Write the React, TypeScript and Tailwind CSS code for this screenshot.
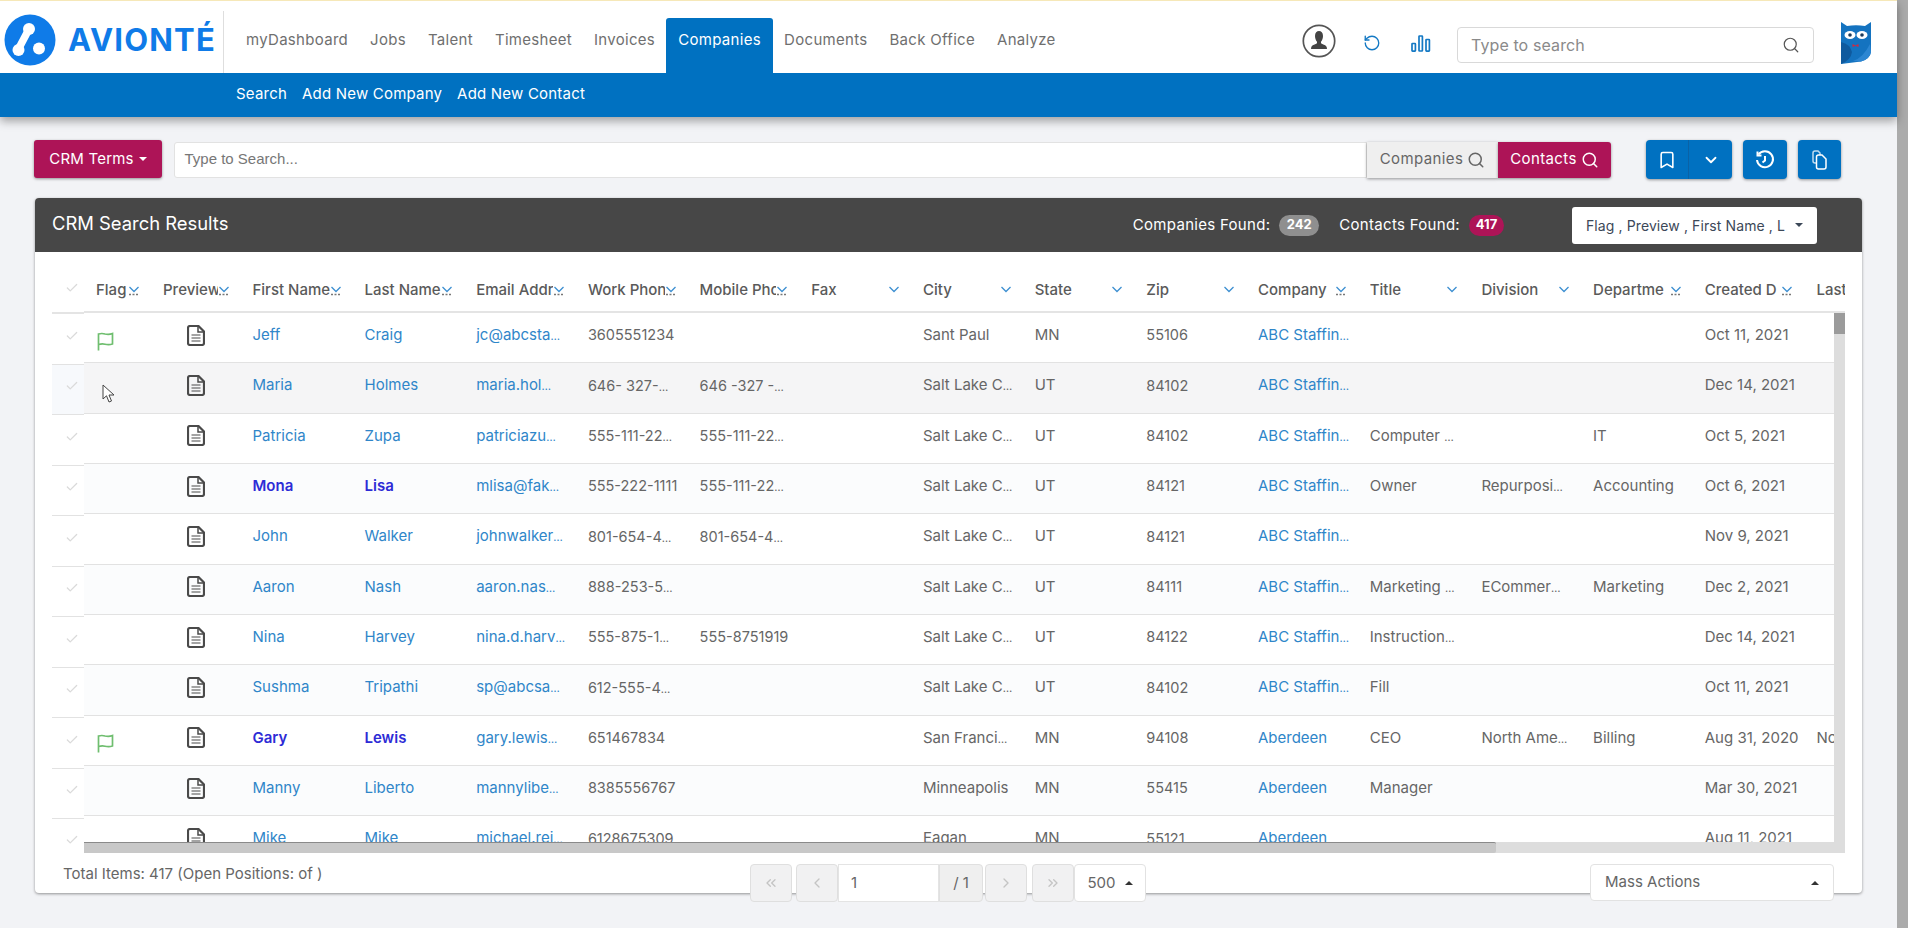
import { Search, ChevronDown, ChevronLeft, ChevronRight, ChevronsLeft, ChevronsRight, RotateCcw, Bookmark, Check } from "lucide-react";

type Row = {
  first: string;
  last: string;
  email: string;
  work?: string;
  mobile?: string;
  city: string;
  state: string;
  zip: string;
  company: string;
  title?: string;
  division?: string;
  dept?: string;
  created: string;
  lastCol?: string;
  flag?: boolean;
  bold?: boolean;
};

const ROWS: Row[] = [
  { first: "Jeff", last: "Craig", email: "jc@abcsta…", work: "3605551234", city: "Sant Paul", state: "MN", zip: "55106", company: "ABC Staffin…", created: "Oct 11, 2021", flag: true },
  { first: "Maria", last: "Holmes", email: "maria.hol…", work: "646- 327-…", mobile: "646 -327 -…", city: "Salt Lake C…", state: "UT", zip: "84102", company: "ABC Staffin…", created: "Dec 14, 2021" },
  { first: "Patricia", last: "Zupa", email: "patriciazu…", work: "555-111-22…", mobile: "555-111-22…", city: "Salt Lake C…", state: "UT", zip: "84102", company: "ABC Staffin…", title: "Computer …", dept: "IT", created: "Oct 5, 2021" },
  { first: "Mona", last: "Lisa", email: "mlisa@fak…", work: "555-222-1111", mobile: "555-111-22…", city: "Salt Lake C…", state: "UT", zip: "84121", company: "ABC Staffin…", title: "Owner", division: "Repurposi…", dept: "Accounting", created: "Oct 6, 2021", bold: true },
  { first: "John", last: "Walker", email: "johnwalker…", work: "801-654-4…", mobile: "801-654-4…", city: "Salt Lake C…", state: "UT", zip: "84121", company: "ABC Staffin…", created: "Nov 9, 2021" },
  { first: "Aaron", last: "Nash", email: "aaron.nas…", work: "888-253-5…", city: "Salt Lake C…", state: "UT", zip: "84111", company: "ABC Staffin…", title: "Marketing …", division: "ECommer…", dept: "Marketing", created: "Dec 2, 2021" },
  { first: "Nina", last: "Harvey", email: "nina.d.harv…", work: "555-875-1…", mobile: "555-8751919", city: "Salt Lake C…", state: "UT", zip: "84122", company: "ABC Staffin…", title: "Instruction…", created: "Dec 14, 2021" },
  { first: "Sushma", last: "Tripathi", email: "sp@abcsa…", work: "612-555-4…", city: "Salt Lake C…", state: "UT", zip: "84102", company: "ABC Staffin…", title: "Fill", created: "Oct 11, 2021" },
  { first: "Gary", last: "Lewis", email: "gary.lewis…", work: "651467834", city: "San Franci…", state: "MN", zip: "94108", company: "Aberdeen", title: "CEO", division: "North Ame…", dept: "Billing", created: "Aug 31, 2020", lastCol: "No", flag: true, bold: true },
  { first: "Manny", last: "Liberto", email: "mannylibe…", work: "8385556767", city: "Minneapolis", state: "MN", zip: "55415", company: "Aberdeen", title: "Manager", created: "Mar 30, 2021" },
  { first: "Mike", last: "Mike", email: "michael.rei…", work: "6128675309", city: "Eagan", state: "MN", zip: "55121", company: "Aberdeen", created: "Aug 11, 2021" },
];

const HEADERS: { label: string; dots?: boolean; width: string }[] = [
  { label: "Flag", dots: true, width: "w-[67px]" },
  { label: "Preview", dots: true, width: "w-[89.5px]" },
  { label: "First Name", dots: true, width: "w-[112px]" },
  { label: "Last Name", dots: true, width: "w-[111.7px]" },
  { label: "Email Addr", dots: true, width: "w-[111.7px]" },
  { label: "Work Phon", dots: true, width: "w-[111.7px]" },
  { label: "Mobile Pho", dots: true, width: "w-[111.7px]" },
  { label: "Fax", width: "w-[111.7px]" },
  { label: "City", width: "w-[111.7px]" },
  { label: "State", width: "w-[111.7px]" },
  { label: "Zip", width: "w-[111.7px]" },
  { label: "Company", dots: true, width: "w-[111.7px]" },
  { label: "Title", width: "w-[111.7px]" },
  { label: "Division", width: "w-[111.7px]" },
  { label: "Departme", dots: true, width: "w-[111.7px]" },
  { label: "Created D", dots: true, width: "w-[111.7px]" },
];

function Logo() {
  return (
    <svg width="52" height="52" viewBox="0 0 52 52" className="shrink-0">
      <circle cx="26" cy="26" r="25.5" fill="#0f7be8" />
      <path d="M25 15 L14.500 35" stroke="#fff" strokeWidth="7.500" strokeLinecap="round" />
      <circle cx="25" cy="15" r="6" fill="#fff" />
      <circle cx="14.500" cy="36" r="6" fill="#fff" />
      <circle cx="35" cy="34.500" r="6" fill="#fff" />
    </svg>
  );
}

function UserCircle() {
  return (
    <svg width="34" height="34" viewBox="0 0 34 34">
      <circle cx="17" cy="17" r="15.7" fill="none" stroke="#555" strokeWidth="1.7" />
      <path d="M13 12c0-3.400 1.800-5 4-5s4 1.600 4 5c0 2.500-.9 4.600-2 5.700v1.600c1 1 4.700 1.500 5.700 3.700l.3 2H9l.3-2c1-2.200 4.700-2.700 5.700-3.700v-1.600c-1.100-1.100-2-3.200-2-5.700z" fill="#444" />
    </svg>
  );
}

function Bars() {
  return (
    <svg width="20" height="17" viewBox="0 0 20 17" fill="none" stroke="#1479c4" strokeWidth="1.700">
      <rect x="1" y="8.500" width="3.400" height="7.600" rx="0.5" />
      <rect x="8" y="1" width="3.400" height="15" rx="0.5" />
      <rect x="15" y="4.500" width="3.400" height="11.600" rx="0.5" />
    </svg>
  );
}

function Owl() {
  return (
    <svg width="30" height="42" viewBox="0 0 30 42">
      <path d="M0 0 L6 4 Q15 2.500 24 4 L30 0 V30 Q29 37 20 39.500 L0 42 Z" fill="#1473c0" />
      <path d="M0 20 Q9 22 11 30 Q10 38 0 42 Z" fill="#0f5a9e" />
      <path d="M12 39 Q22 36 29 22 L30 30 Q29 37 20 39.500 Z" fill="#2c86d2" />
      <ellipse cx="9" cy="13" rx="5.500" ry="4" fill="#fff" />
      <ellipse cx="21" cy="13" rx="5.500" ry="4" fill="#fff" />
      <circle cx="9" cy="13" r="1.800" fill="#1d3b5c" />
      <circle cx="21" cy="13" r="1.800" fill="#1d3b5c" />
      <path d="M11.500 22 L14.500 23.500 L17.500 22 V25 L14.500 23.800 L11.500 25 Z" fill="#d8263c" />
    </svg>
  );
}

function SortIcon({ dots }: { dots?: boolean }) {
  return (
    <svg width="12" height="12" viewBox="0 0 12 12" fill="none" className="shrink-0">
      <path d="M1.500 3 L6 7.500 L10.500 3" stroke="#3d8fd1" strokeWidth="1.300" />
      {dots && <path d="M1 10.500 H11" stroke="#777" strokeWidth="1.300" strokeDasharray="2 1.500" />}
    </svg>
  );
}

function DocIcon() {
  return (
    <svg width="18" height="21" viewBox="0 0 18 21" fill="none" stroke="#4a4a4a" strokeWidth="2.200">
      <path d="M3 1 H11.500 L17 6.500 V18 Q17 20 15 20 H3 Q1 20 1 18 V3 Q1 1 3 1 Z" strokeLinejoin="round" />
      <path d="M11 1 V7 H17" strokeWidth="1.500" />
      <path d="M4.500 10 H13.500 M4.500 13 H13.500 M4.500 16 H13.500" strokeWidth="1.200" />
    </svg>
  );
}

function FlagIcon() {
  return (
    <svg width="17" height="19" viewBox="0 0 17 19" fill="none" stroke="#6fbe6f" strokeWidth="1.700">
      <path d="M1.500 18.500 V2 Q5 1 8 2 Q12 3 15.500 1.500 V12 Q12 13.200 8 12.200 Q5 11.500 1.500 12.500" />
    </svg>
  );
}

function Cursor() {
  return (
    <svg width="13" height="20" viewBox="0 0 13 20" className="absolute left-[18px] top-[21px]">
      <path d="M1 1 V15 L4.500 11.800 L7 18 L9.500 17 L7 11 H12 Z" fill="#fff" stroke="#444" strokeWidth="1" />
    </svg>
  );
}

function HistoryIcon() {
  return (
    <svg width="20" height="20" viewBox="0 0 20 20" fill="none" stroke="#fff" strokeWidth="2">
      <path d="M3.500 4.500 A8 8 0 1 1 2 10" />
      <path d="M2.500 1.500 V5.500 H6.500" />
      <path d="M10 6 V10.500 L7.500 12.500" />
    </svg>
  );
}

function CopyIcon() {
  return (
    <svg width="15" height="20" viewBox="0 0 15 20" fill="none" stroke="#fff" strokeWidth="1.500">
      <path d="M1 3 Q1 1 3 1 H6 L8 3 V13 H3 Q1 13 1 11 Z" opacity="0.75" />
      <path d="M4.500 7 Q4.500 5 6.500 5 H10 L14 9 V17 Q14 19 12 19 H6.500 Q4.500 19 4.500 17 Z" fill="#0071c1" />
    </svg>
  );
}

function Caret({ up }: { up?: boolean }) {
  return up ? (
    <span className="inline-block h-0 w-0 border-x-[4px] border-b-[4px] border-x-transparent border-b-[#333]" />
  ) : (
    <span className="inline-block h-0 w-0 border-x-[4px] border-t-[4px] border-x-transparent border-t-current" />
  );
}

function PageBtn({ children }: { children: React.ReactNode }) {
  return (
    <div className="flex h-[38px] w-[42px] items-center justify-center rounded-[4px] border border-[#dfdfdf] bg-[#f1f1f2] text-[#c4c4c4]">
      {children}
    </div>
  );
}

// the browser's own ellipsis in the original font is narrower than Inter's
function Clipped({ text }: { text?: string }) {
  if (!text || !text.endsWith("…")) return <>{text}</>;
  return (
    <>
      {text.slice(0, -1)}
      <span className="text-[11px]">…</span>
    </>
  );
}

function Cell({ w, text, cls }: { w: string; text?: string; cls?: string }) {
  return (
    <div className={`${w} shrink-0 truncate pl-[12px] pb-[5px] ${cls ?? ""}`}>
      <Clipped text={text} />
    </div>
  );
}

export default function App() {
  const nav = ["myDashboard", "Jobs", "Talent", "Timesheet", "Invoices", "Companies", "Documents", "Back Office", "Analyze"];

  return (
    <div className="flex h-[928px] w-[1908px] overflow-hidden bg-[#f2f3f6] [font-family:Inter,sans-serif] text-[15px] text-[#666]">
      <div className="flex w-[1897px] shrink-0 flex-col">
        <div className="relative z-10 shadow-[0_4px_9px_rgba(0,0,0,0.35)]">
          <div className="h-[1px] bg-[#f6e8b8]" />
          <div className="flex h-[72px] items-end bg-white">
            <div className="flex h-[62px] w-[224px] shrink-0 items-center gap-[12px] border-r border-[#dedede] pb-[5px] pl-[4px]">
              <Logo />
              <span className="text-[31px] leading-none font-bold tracking-[1.2px] text-[#0f7be8]">AVIONTÉ</span>
            </div>
            <nav className="ml-[11px] flex h-[55px] items-stretch">
              {nav.map((item) =>
                item === "Companies" ? (
                  <div key={item} className="flex w-[107px] items-center justify-center rounded-t-[3px] bg-[#0071c1] pb-[11px] tracking-[0.3px] text-white">
                    {item}
                  </div>
                ) : (
                  <div key={item} className="flex items-center px-[11px] pb-[11px] tracking-[0.3px] text-[#6f6f6f]">
                    {item}
                  </div>
                ),
              )}
            </nav>
            <div className="ml-auto flex h-full items-center pt-[8px] pr-[26px]">
              <UserCircle />
              <RotateCcw size={18} strokeWidth={1.8} color="#1479c4" className="mt-[4px] ml-[27px]" />
              <div className="mt-[5px] ml-[30px]">
                <Bars />
              </div>
              <div className="mt-[8px] ml-[26px] flex h-[36px] w-[357px] items-center justify-between rounded-[4px] border border-[#d9d9d9] pr-[13px] pl-[13px] text-[16px] tracking-[0.1px] text-[#8a8a8a]">
                Type to search
                <Search size={18} strokeWidth={1.6} color="#555" />
              </div>
              <div className="mt-[4px] ml-[27px]">
                <Owl />
              </div>
            </div>
          </div>
          <div className="flex h-[44px] items-center gap-[15px] bg-[#0071c1] pb-[2px] pl-[236px] tracking-[0.2px] text-white">
            <span>Search</span>
            <span>Add New Company</span>
            <span>Add New Contact</span>
          </div>
        </div>

        <div className="flex pt-[23px] pl-[34px]">
          <div className="flex h-[38px] w-[128px] items-center justify-center gap-[5px] rounded-[3px] bg-[#ad1457] tracking-[0.2px] text-white shadow-[0_1px_3px_rgba(0,0,0,0.4)]">
            CRM Terms <Caret />
          </div>
          <div className="ml-[11.5px] flex h-[36px] w-[1193.5px] items-center self-center rounded-l-[3px] border border-[#e2e2e2] bg-white pl-[10px] [font-family:'Liberation_Sans',sans-serif] text-[15px] text-[#777]">
            Type to Search...
          </div>
          <div className="flex h-[36px] w-[131px] items-center justify-center gap-[4px] self-center bg-[#efefef] tracking-[0.4px] text-[#666] shadow-[0_1px_3px_rgba(0,0,0,0.4)]">
            Companies <Search size={18} strokeWidth={2} />
          </div>
          <div className="flex h-[36px] w-[113px] items-center justify-center gap-[4px] self-center rounded-r-[3px] bg-[#ad1457] tracking-[0.4px] text-white shadow-[0_1px_3px_rgba(0,0,0,0.4)]">
            Contacts <Search size={18} strokeWidth={2} />
          </div>
          <div className="ml-[35px] flex h-[39px] w-[86px] rounded-[4px] bg-[#0071c1] text-white shadow-[0_1px_3px_rgba(0,0,0,0.4)]">
            <div className="flex w-[43px] items-center justify-center border-r border-[#0a62a6]">
              <Bookmark size={20} strokeWidth={1.9} />
            </div>
            <div className="flex flex-1 items-center justify-center">
              <ChevronDown size={18} strokeWidth={2.4} />
            </div>
          </div>
          <div className="ml-[11px] flex h-[39px] w-[44px] items-center justify-center rounded-[4px] bg-[#0071c1] shadow-[0_1px_3px_rgba(0,0,0,0.4)]">
            <HistoryIcon />
          </div>
          <div className="ml-[11px] flex h-[39px] w-[43px] items-center justify-center rounded-[4px] bg-[#0071c1] shadow-[0_1px_3px_rgba(0,0,0,0.4)]">
            <CopyIcon />
          </div>
        </div>

        <div className="mt-[19px] ml-[35px] w-[1827px] rounded-[4px] bg-white shadow-[0_1px_3px_rgba(0,0,0,0.4)]">
          <div className="flex h-[54px] items-center rounded-t-[4px] bg-[#474747] pr-[45px] pl-[17px] text-white">
            <span className="pb-[2px] text-[18.4px]">CRM Search Results</span>
            <span className="ml-auto tracking-[0.3px]">Companies Found:</span>
            <span className="ml-[9px] flex h-[21px] w-[40px] items-center justify-center rounded-full bg-[#8f8f8f] text-[13px] font-bold">242</span>
            <span className="ml-[20px] tracking-[0.3px]">Contacts Found:</span>
            <span className="ml-[9px] flex h-[21px] w-[35px] items-center justify-center rounded-full bg-[#ad1457] text-[13px] font-bold">417</span>
            <div className="ml-[68px] flex h-[37px] w-[245px] items-center justify-between rounded-[3px] bg-white pr-[14px] pl-[14px] text-[14px] tracking-[0.1px] text-[#3c4858]">
              <span className="w-[203px] overflow-hidden whitespace-nowrap">Flag , Preview , First Name , L</span>
              <Caret />
            </div>
          </div>

          <div className="flex pr-[17px] pl-[17px]">
            <div className="w-[32px] shrink-0">
              <div className="flex h-[62px] items-center justify-center border-b-2 border-[#e4e4e4] pt-[12px] pl-[8px] text-[#dadada]">
                <Check size={14} strokeWidth={2.2} />
              </div>
              {ROWS.map((r, i) => (
                <div
                  key={r.first + i}
                  className={`flex items-center justify-center pl-[8px] text-[#dadada] ${i === 10 ? "h-[34px] pt-[8px]" : "h-[50.5px] border-b border-[#e2e2e2] pb-[6px]"} ${i === 1 ? "bg-[#f7f9fc]" : ""}`}
                >
                  <Check size={14} strokeWidth={2.2} />
                </div>
              ))}
            </div>

            <div className="w-[1761px] overflow-hidden">
              <div className="flex h-[61px] items-center whitespace-nowrap border-b-2 border-[#e4e4e4] pt-[17px] font-medium text-[#5a5a5a]">
                {HEADERS.map((h) => (
                  <div key={h.label} className={`${h.width} flex shrink-0 items-center justify-between pr-[11px] pl-[12px]`}>
                    <span className="min-w-0 overflow-hidden">{h.label}</span>
                    <SortIcon dots={h.dots} />
                  </div>
                ))}
                <div className="shrink-0 pl-[12px]">Last</div>
              </div>

              <div className="flex h-[529px]">
                <div className="w-[1750px] shrink-0 overflow-hidden">
                  {ROWS.map((r, i) => {
                    const link = `${r.bold ? "font-semibold text-[#2d2bd6]" : "text-[#2f86c9]"}`;
                    return (
                      <div
                        key={r.first + r.last}
                        className={`flex h-[50.33px] items-center whitespace-nowrap border-b border-[#e2e2e2] ${i === 1 ? "bg-[#f5f5f6]" : i % 2 === 1 ? "bg-[#fbfcfd]" : "bg-white"}`}
                      >
                        <div className="relative flex h-full w-[67px] shrink-0 items-center pt-[7px] pl-[13px]">
                          {r.flag && <FlagIcon />}
                          {i === 1 && <Cursor />}
                        </div>
                        <div className="flex w-[89.5px] shrink-0 items-center justify-center pb-[5px]">
                          <DocIcon />
                        </div>
                        <Cell w="w-[112px]" cls={link} text={r.first} />
                        <Cell w="w-[111.7px]" cls={link} text={r.last} />
                        <Cell w="w-[111.7px]" cls="text-[#2f86c9]" text={r.email} />
                        <Cell w="w-[111.7px]" cls="text-[14.5px]" text={r.work} />
                        <Cell w="w-[111.7px]" cls="text-[14.5px]" text={r.mobile} />
                        <Cell w="w-[111.7px]" />
                        <Cell w="w-[111.7px]" text={r.city} />
                        <Cell w="w-[111.7px]" text={r.state} />
                        <Cell w="w-[111.7px]" cls="text-[14.5px]" text={r.zip} />
                        <Cell w="w-[111.7px]" cls="text-[#2f86c9]" text={r.company} />
                        <Cell w="w-[111.7px]" text={r.title} />
                        <Cell w="w-[111.7px]" text={r.division} />
                        <Cell w="w-[111.7px]" text={r.dept} />
                        <Cell w="w-[111.7px]" text={r.created} />
                        <Cell w="w-[50px]" text={r.lastCol} />
                      </div>
                    );
                  })}
                </div>
                <div className="w-[11px] shrink-0 bg-[#dddddd]">
                  <div className="h-[21px] bg-[#9b9b9b]" />
                </div>
              </div>
              <div className="flex h-[11px] bg-[#dddddd]">
                <div className="h-full w-[1412px] rounded-r-[2px] border-t border-[#8a8a8a] bg-[#c8c8c8]" />
              </div>
            </div>
          </div>

          <div className="flex h-[40px] items-start pt-[11px] pr-[28px] pl-[28px]">
            <div className="-mt-[9px] h-[38px] w-[687px] leading-[38px]">Total Items: 417 (Open Positions: of )</div>
            <div className="flex items-center">
              <PageBtn><ChevronsLeft size={16} /></PageBtn>
              <div className="ml-[4px]"><PageBtn><ChevronLeft size={16} /></PageBtn></div>
              <div className="flex h-[38px] w-[101px] items-center border border-[#e4e4e4] bg-white pl-[12px]">1</div>
              <div className="flex h-[38px] w-[44px] items-center justify-center rounded-r-[4px] border border-[#e0e0e0] bg-[#efefef]">/ 1</div>
              <div className="ml-[2px]"><PageBtn><ChevronRight size={16} /></PageBtn></div>
              <div className="ml-[5px]"><PageBtn><ChevronsRight size={16} /></PageBtn></div>
              <div className="flex h-[38px] w-[72px] items-center justify-center gap-[9px] rounded-[4px] border border-[#e2e2e2] bg-white">
                500 <Caret up />
              </div>
            </div>
            <div className="ml-auto flex h-[37px] w-[244px] items-center justify-between rounded-[4px] border border-[#e2e2e2] bg-white pr-[14px] pl-[14px]">
              Mass Actions <Caret up />
            </div>
          </div>
        </div>
      </div>
      <div className="w-[11px] shrink-0 bg-[#ababab]" />
    </div>
  );
}
